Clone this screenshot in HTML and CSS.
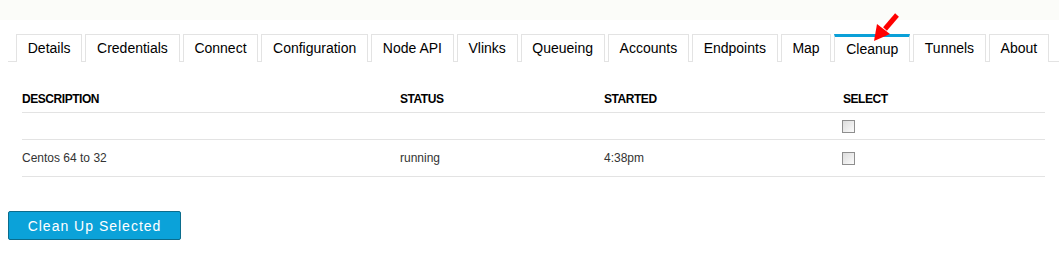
FILE: index.html
```html
<!DOCTYPE html>
<html lang="en">
<head>
    <meta charset="UTF-8">
    <title>Cleanup</title>
    <link rel="stylesheet" href="styles.css">
</head>
<body>

<div class="topBar"></div>

<div class="tabBar">
    <ul class="tabs">
        <li class="tab">Details</li>
        <li class="tab">Credentials</li>
        <li class="tab">Connect</li>
        <li class="tab">Configuration</li>
        <li class="tab">Node API</li>
        <li class="tab">Vlinks</li>
        <li class="tab">Queueing</li>
        <li class="tab">Accounts</li>
        <li class="tab">Endpoints</li>
        <li class="tab">Map</li>
        <li class="tab active">Cleanup
            <svg class="pointer" width="30" height="32" viewBox="0 0 30 32">
                <line x1="27" y1="3" x2="15" y2="17" stroke="#f00" stroke-width="5"/>
                <polygon points="4,29 7,12 20,22" fill="#f00"/>
            </svg>
        </li>
        <li class="tab">Tunnels</li>
        <li class="tab">About</li>
    </ul>
</div>

<table class="jobs">
    <thead>
        <tr>
            <th class="colDesc">DESCRIPTION</th>
            <th class="colStatus">STATUS</th>
            <th class="colStarted">STARTED</th>
            <th>SELECT</th>
        </tr>
    </thead>
    <tbody>
        <tr class="allRow">
            <td></td>
            <td></td>
            <td></td>
            <td><input type="checkbox" class="check"></td>
        </tr>
        <tr class="jobRow">
            <td>Centos 64 to 32</td>
            <td>running</td>
            <td>4:38pm</td>
            <td><input type="checkbox" class="check"></td>
        </tr>
    </tbody>
</table>

<button class="cleanBtn">Clean Up Selected</button>

</body>
</html>
```

FILE: styles.css
```css
body {
    margin: 0;
    font-family: "Liberation Sans", Arial, sans-serif;
    background: #fff;
}

.topBar {
    height: 20px;
    background: #fbfcf9;
}

.tabBar {
    margin: 14px 0 0 8px;
    border-bottom: 1px solid #e3e3e3;
}

.tabs {
    display: flex;
    margin: 0 0 -1px 8px;
    padding: 0;
    list-style: none;
}

.tab {
    position: relative;
    flex-shrink: 0;
    box-sizing: border-box;
    height: 28px;
    padding: 0 10.75px;
    margin-right: 3px;
    border: 1px solid #e3e3e3;
    border-bottom: none;
    font-size: 14px;
    line-height: 27px;
    white-space: nowrap;
    color: #000;
    background: #fff;
}

.tab.active {
    border-top: 3px solid #0aa0d8;
    line-height: 25px;
    z-index: 1;
}

.pointer {
    position: absolute;
    left: 35px;
    top: -25px;
}

.jobs {
    margin: 14px 0 0 22px;
    width: 1023px;
    border-collapse: collapse;
    font-size: 12px;
    color: #333;
}

.jobs th {
    text-align: left;
    font-weight: bold;
    letter-spacing: -0.45px;
    color: #000;
    padding: 0 0 6px 0;
    height: 30px;
    vertical-align: bottom;
    border-bottom: 1px solid #e3e3e3;
}

.colDesc {
    width: 378px;
}

.colStatus {
    width: 204px;
}

.colStarted {
    width: 239px;
}

.jobs td {
    padding: 0;
    border-bottom: 1px solid #e3e3e3;
}

.allRow td {
    height: 26px;
}

.jobRow td {
    height: 36px;
}

.check {
    -webkit-appearance: none;
    appearance: none;
    display: block;
    width: 13px;
    height: 13px;
    margin: 0 0 0 -1px;
    border: 1px solid #8e8e8e;
    background: linear-gradient(135deg, #dcdcdc, #fbfbfb);
    box-sizing: border-box;
}

.cleanBtn {
    display: block;
    margin: 34px 0 0 8px;
    width: 173px;
    height: 29px;
    padding: 0;
    border: 1px solid #0b6c8c;
    border-radius: 2px;
    background: #0ba2d9;
    color: #fff;
    font-family: "Liberation Sans", Arial, sans-serif;
    font-size: 14px;
    letter-spacing: 1px;
}
```
